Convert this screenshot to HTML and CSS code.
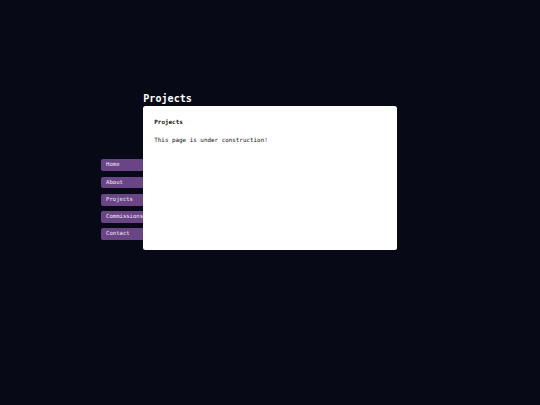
FILE: index.html
```html
<!DOCTYPE html>
<html>
<head>
<meta charset="utf-8">
<link rel="stylesheet" href="styles.css">
</head>
<body>
<div class="layout">
  <nav class="nav">
    <a class="nav-item">Home</a>
    <a class="nav-item">About</a>
    <a class="nav-item">Projects</a>
    <a class="nav-item">Commissions</a>
    <a class="nav-item">Contact</a>
  </nav>
  <main class="main">
    <h1 class="title">Projects</h1>
    <section class="card">
      <h2 class="card-title">Projects</h2>
      <p class="card-text">This page is under construction!</p>
    </section>
  </main>
  <div class="spacer"></div>
</div>
</body>
</html>
```
FILE: styles.css
```css
html, body {
  margin: 0;
  padding: 0;
  background: #070a16;
  height: 100%;
}
body {
  font-family: "DejaVu Sans Mono", monospace;
}
.layout {
  display: flex;
  justify-content: center;
  padding-top: 92px;
}
.nav {
  width: 42px;
  display: flex;
  flex-direction: column;
  gap: 5.5px;
  margin-top: 67.3px;
}
.nav-item {
  display: block;
  width: 50px;
  height: 11.75px;
  line-height: 11.75px;
  box-sizing: border-box;
  padding-left: 4.8px;
  background: #6a4585;
  color: #f2eef6;
  font-size: 5.6px;
  border-radius: 2px 0 0 2px;
  white-space: nowrap;
}
.main {
  width: 253.5px;
  position: relative;
  z-index: 1;
}
.spacer {
  width: 42px;
}
.title {
  margin: 0;
  color: #ffffff;
  font-size: 10.1px;
  font-weight: bold;
  line-height: 14px;
}
.card {
  background: #ffffff;
  border-radius: 2.5px;
  height: 143.5px;
  box-sizing: border-box;
  padding: 12px 11px;
  color: #111111;
}
.card-title {
  margin: 0;
  font-size: 5.95px;
  font-weight: bold;
  line-height: 7px;
}
.card-text {
  margin: 12px 0 0;
  font-size: 5.9px;
  line-height: 7px;
}
```
